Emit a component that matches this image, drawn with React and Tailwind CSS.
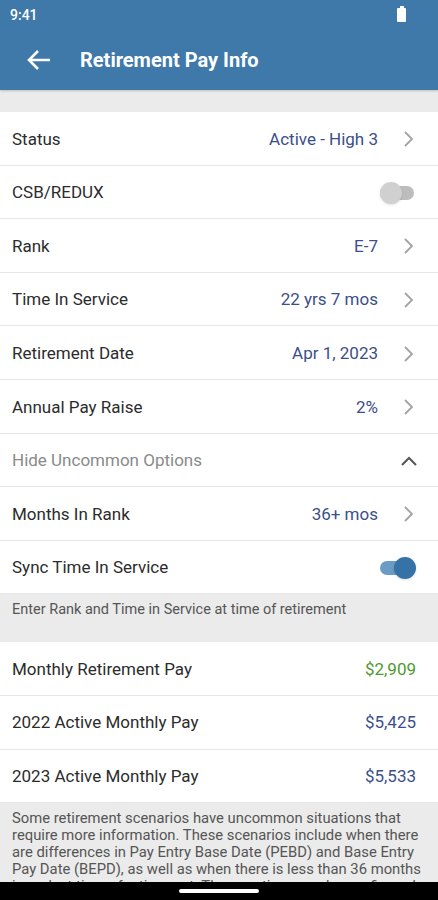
import React from 'react';

const font = { fontFamily: 'Roboto, "Liberation Sans", sans-serif' };

const Chevron = () => (
  <svg width="14" height="18" viewBox="0 0 14 18" fill="none" className="ml-6">
    <path d="M3 2l7 7-7 7" stroke="#a3a3a3" strokeWidth="1.8" />
  </svg>
);

const Toggle = ({ on }) =>
  on ? (
    <div className="relative w-[36px] h-[22px] flex items-center">
      <div className="w-[34px] h-[14px] rounded-full bg-[#6b9cc6]" />
      <div className="absolute right-0 w-[22px] h-[22px] rounded-full bg-[#3572a6] shadow" />
    </div>
  ) : (
    <div className="relative w-[36px] h-[22px] flex items-center">
      <div className="w-[34px] h-[14px] rounded-full bg-[#bdbdbd]" />
      <div className="absolute left-0 w-[22px] h-[22px] rounded-full bg-[#d0d0d0] shadow" />
    </div>
  );

const Row = ({ label, value, valueClass = 'text-[#3b4f8a]', right, muted }) => (
  <div className="h-[53.6px] flex items-center justify-between pl-3 pr-[22px] pt-[2px] bg-white border-b border-[#e6e6e6]">
    <span className={`text-[17px] ${muted ? 'text-[#8a8a8a]' : 'text-[#2c2c2c]'}`}>{label}</span>
    <div className="flex items-center">
      {value && <span className={`text-[17px] ${valueClass}`}>{value}</span>}
      {right}
    </div>
  </div>
);

export default function App() {
  return (
    <div style={font} className="w-[438px] h-[900px] flex flex-col overflow-hidden bg-[#ebebeb]">
      {/* Header */}
      <div className="bg-[#3e79a9] h-[90px] shadow-[0_1px_2px_rgba(0,0,0,0.2)]">
        <div className="h-[30px] flex items-center justify-between pl-[10px] pr-[32px]">
          <span className="text-white text-[14px] font-medium">9:41</span>
          <div className="w-[9px] h-[14px] bg-white rounded-[1px] relative">
            <div className="absolute -top-[2px] left-[2.5px] w-[4px] h-[2px] bg-white" />
          </div>
        </div>
        <div className="h-[60px] flex items-center pl-[26px]">
          <svg width="26" height="22" viewBox="0 0 26 22" fill="none">
            <path d="M24 11H3M12 2L3 11l9 9" stroke="white" strokeWidth="2.6" />
          </svg>
          <span className="ml-[28px] text-white text-[20px] font-bold">Retirement Pay Info</span>
        </div>
      </div>

      <div className="flex-1 overflow-hidden">
        <div className="h-[22px]" />
        <Row label="Status" value="Active - High 3" right={<Chevron />} />
        <Row label="CSB/REDUX" right={<Toggle />} />
        <Row label="Rank" value="E-7" right={<Chevron />} />
        <Row label="Time In Service" value="22 yrs 7 mos" right={<Chevron />} />
        <Row label="Retirement Date" value="Apr 1, 2023" right={<Chevron />} />
        <Row label="Annual Pay Raise" value="2%" right={<Chevron />} />
        <Row
          label="Hide Uncommon Options"
          muted
          right={
            <svg width="18" height="12" viewBox="0 0 18 12" fill="none" className="mr-[-2px]">
              <path d="M2 10l7-7 7 7" stroke="#555" strokeWidth="2" />
            </svg>
          }
        />
        <Row label="Months In Rank" value="36+ mos" right={<Chevron />} />
        <Row label="Sync Time In Service" right={<Toggle on />} />
        <div className="h-[48px] px-3 pt-[5px] text-[14.5px] text-[#555]">
          Enter Rank and Time in Service at time of retirement
        </div>
        <Row label="Monthly Retirement Pay" value="$2,909" valueClass="text-[#4f9a2f]" />
        <Row label="2022 Active Monthly Pay" value="$5,425" />
        <Row label="2023 Active Monthly Pay" value="$5,533" />
        <div className="pl-3 pr-2 pt-[7px] text-[14.8px] leading-[17px] text-[#555]">
          Some retirement scenarios have uncommon situations that require more information. These
          scenarios include when there are differences in Pay Entry Base Date (PEBD) and Base Entry
          Pay Date (BEPD), as well as when there is less than 36 months in rank at time of
          retirement. These options can be configured above.
        </div>
      </div>

      {/* Nav bar */}
      <div className="h-[18px] bg-black flex items-center justify-center">
        <div className="w-[80px] h-[4px] rounded-full bg-white" />
      </div>
    </div>
  );
}
